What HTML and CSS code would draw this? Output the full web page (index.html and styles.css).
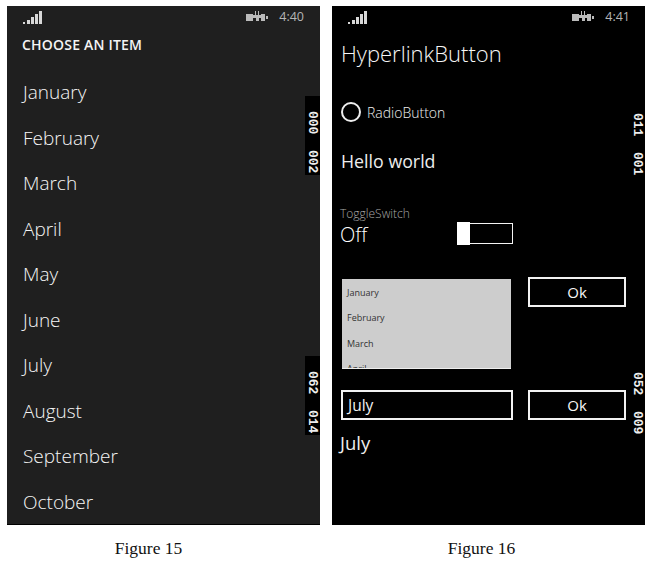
FILE: index.html
```html
<!DOCTYPE html>
<html lang="en">
<head>
<meta charset="utf-8">
<title>Figures 15 and 16</title>
<link rel="stylesheet" href="styles.css">
</head>
<body>
<main class="figures">
  <figure class="figure figure-left">
    <section class="phone phone-picker">
      <header class="status">
        <svg class="signal" viewBox="0 0 20 13" aria-hidden="true"><path d="M0 11h2v2H0zM4 9h3v4H4zM8 6h3v7H8zM12 3h3v10h-3zM16 0h3v13h-3z"/></svg>
        <svg class="battery" viewBox="0 0 22 11" aria-hidden="true"><path d="M0 3h7v7H0zM7 4h2V0h1v4h2V0h1v4h2v3h-2v3h-3V7H7zM15 3h4v7h-4zM20 5h2v3h-2z"/></svg>
        <span class="clock">4:40</span>
      </header>
      <h1 class="picker-title">CHOOSE AN ITEM</h1>
      <ul class="months">
        <li>January</li><li>February</li><li>March</li><li>April</li><li>May</li>
        <li>June</li><li>July</li><li>August</li><li>September</li><li>October</li>
      </ul>
      <div class="counter counter-box counter-a"><span>000</span><span>002</span></div>
      <div class="counter counter-box counter-b"><span>062</span><span>014</span></div>
    </section>
    <figcaption class="caption">Figure 15</figcaption>
  </figure>

  <figure class="figure figure-right">
    <section class="phone phone-controls">
      <header class="status">
        <svg class="signal" viewBox="0 0 20 13" aria-hidden="true"><path d="M0 11h2v2H0zM4 9h3v4H4zM8 6h3v7H8zM12 3h3v10h-3zM16 0h3v13h-3z"/></svg>
        <svg class="battery" viewBox="0 0 22 11" aria-hidden="true"><path d="M0 3h7v7H0zM7 4h2V0h1v4h2V0h1v4h2v3h-2v3h-3V7H7zM15 3h4v7h-4zM20 5h2v3h-2z"/></svg>
        <span class="clock">4:41</span>
      </header>
      <h1 class="link-title">HyperlinkButton</h1>
      <div class="radio-row"><span class="radio"></span><span>RadioButton</span></div>
      <p class="hello">Hello world</p>
      <p class="toggle-label">ToggleSwitch</p>
      <div class="toggle-row">
        <span class="toggle-state">Off</span>
        <span class="switch"><span class="switch-thumb"></span></span>
      </div>
      <div class="list-row">
        <div class="listbox">
          <div class="list-item">January</div>
          <div class="list-item">February</div>
          <div class="list-item">March</div>
          <div class="list-item">April</div>
        </div>
        <button class="ok ok-top" type="button">Ok</button>
      </div>
      <div class="input-row">
        <div class="textbox">July</div>
        <button class="ok" type="button">Ok</button>
      </div>
      <p class="result">July</p>
      <div class="counter counter-c"><span>011</span><span>001</span></div>
      <div class="counter counter-d"><span>052</span><span>009</span></div>
    </section>
    <figcaption class="caption">Figure 16</figcaption>
  </figure>
</main>
</body>
</html>
```

FILE: styles.css
```css
* { box-sizing: border-box; }
html, body { margin: 0; padding: 0; }
body {
  width: 650px;
  height: 568px;
  overflow: hidden;
  background: #fff;
  font-family: "Open Sans", "Noto Sans", sans-serif;
}
.figures {
  display: flex;
  gap: 12px;
  padding: 6px 0 0 7px;
}
.figure { margin: 0; width: 313px; }
.phone {
  position: relative;
  width: 313px;
  height: 519px;
  color: #f2f2f2;
  overflow: hidden;
}
.phone-picker { background: #1f1f1f; border-bottom: 1px solid #000; padding: 0 0 0 16px; }
.phone-controls { background: #000; padding: 0 0 0 9px; }

.status {
  display: flex;
  align-items: center;
  height: 21px;
  padding-right: 16px;
  color: #b5b5b5;
}
.phone-controls .status { padding-left: 7px; padding-right: 15px; }
.signal { width: 20px; height: 13px; fill: #d8d8d8; margin-top: 1px; }
.battery { width: 22px; height: 11px; fill: #bbb; margin-left: auto; margin-right: 11px; }
.clock { font-size: 12.5px; line-height: 14px; }

.picker-title {
  margin: 9px 0 0 -1px;
  font-size: 14px;
  line-height: 17px;
  font-weight: 600;
  letter-spacing: 0.2px;
  color: #f4f4f4;
}
.months {
  list-style: none;
  margin: 17px 0 0;
  padding: 0;
}
.months li {
  height: 45.5px;
  line-height: 45.5px;
  font-size: 19px;
  font-weight: 300;
  color: #f6f6f6;
}

.counter {
  position: absolute;
  right: 0;
  width: 15px;
  display: flex;
  flex-direction: column;
  align-items: center;
  gap: 16px;
  font-family: "Liberation Mono", monospace;
  font-size: 13px;
  font-weight: 700;
  line-height: 15px;
  color: #eee;
}
.counter span { writing-mode: vertical-rl; }
.counter-box { background: #000; height: 79px; padding-top: 15px; }
.counter-a { top: 90px; }
.counter-b { top: 350px; }
.counter-c { top: 107px; }
.counter-d { top: 366px; }

.link-title {
  margin: 11px 0 0;
  font-size: 22px;
  line-height: 30px;
  font-weight: 300;
  color: #f6f6f6;
}
.radio-row {
  display: flex;
  align-items: center;
  gap: 6px;
  margin-top: 32px;
  height: 24px;
  font-size: 14px;
  font-weight: 300;
  color: #eee;
}
.radio {
  width: 20px;
  height: 20px;
  border: 2px solid #eee;
  border-radius: 50%;
}
.hello {
  margin: 24px 0 0;
  font-size: 17.8px;
  line-height: 26px;
  font-weight: 400;
  color: #ededed;
}
.toggle-label {
  margin: 32px 0 0 -1px;
  font-size: 12px;
  line-height: 16px;
  font-weight: 300;
  color: #a8a8a8;
}
.toggle-row {
  display: flex;
  align-items: flex-start;
  justify-content: space-between;
  width: 172px;
  height: 24px;
  margin-top: 0;
  font-size: 20px;
  line-height: 25px;
  font-weight: 300;
  color: #fff;
}
.toggle-state { margin-left: -1px; }
.switch {
  display: block;
  width: 56px;
  height: 21px;
  margin-top: 1px;
  border: 1px solid #f4f4f4;
  position: relative;
}
.switch-thumb {
  position: absolute;
  left: -1px;
  top: -2px;
  width: 13px;
  height: 23px;
  background: #fff;
}
.list-row {
  display: flex;
  align-items: flex-start;
  margin-top: 31px;
}
.listbox {
  width: 169px;
  height: 90px;
  margin: 2px 0 0 1px;
  background: #cdcdcd;
  border-bottom: 1px solid #eee;
  overflow: hidden;
  padding: 1px 0 0 5px;
}
.list-item {
  height: 25.4px;
  line-height: 25px;
  font-size: 9px;
  color: #333;
}
.ok {
  width: 98px;
  height: 30px;
  margin-left: 15px;
  padding: 0;
  border: 2px solid #f2f2f2;
  background: #000;
  color: #f6f6f6;
  font-family: "Open Sans", "Noto Sans", sans-serif;
  font-size: 15px;
  font-weight: 400;
}
.ok-top { margin-left: 17px; }
.input-row {
  display: flex;
  margin-top: 21px;
}
.textbox {
  width: 172px;
  height: 30px;
  border: 2px solid #f2f2f2;
  padding-left: 5px;
  font-size: 15.5px;
  font-weight: 400;
  line-height: 26px;
  color: #f2f2f2;
}
.result {
  margin: 9px 0 0 -1px;
  font-size: 18.5px;
  line-height: 28px;
  font-weight: 400;
  color: #ededed;
}
.caption {
  margin-top: 13px;
  font-family: "Liberation Serif", serif;
  font-size: 17.5px;
  line-height: 20px;
  color: #111;
  text-align: center;
  padding-right: 30px;
}
.figure-right .caption { padding-right: 14px; }
```
